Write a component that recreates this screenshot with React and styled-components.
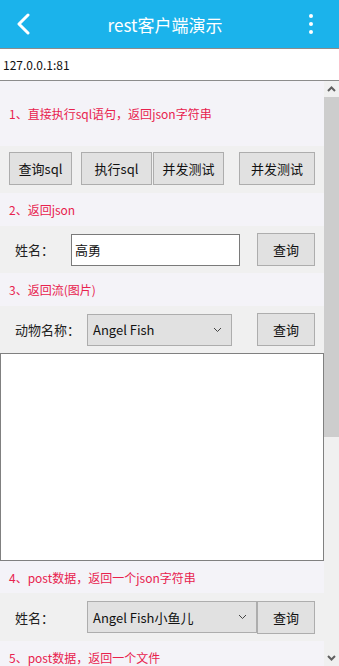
import React from "react";
import styled, { createGlobalStyle } from "styled-components";

const Global = createGlobalStyle`
  html, body { margin: 0; padding: 0; overflow: hidden; background: #ffffff; }
  body { font-family: "Noto Sans CJK SC", "Noto Sans", sans-serif; }
  * { box-sizing: border-box; }
`;

const Page = styled.div`
  width: 339px;
  height: 666px;
  display: flex;
  flex-direction: column;
  overflow: hidden;
`;

const Header = styled.header`
  height: 48px;
  flex: none;
  background: #1bb3eb;
  display: flex;
  align-items: center;
  justify-content: space-between;
  padding: 0 19px 0 14px;
  color: #fff;
`;

const Title = styled.h1`
  margin: 0;
  font-size: 17px;
  font-weight: 400;
  line-height: 1;
  color: #ffffff;
  transform: translateX(-2px);
`;

const IconSlot = styled.div`
  width: 18px;
  height: 24px;
  display: flex;
  align-items: center;
  justify-content: center;
`;

const AddressBar = styled.div`
  height: 33px;
  flex: none;
  border-top: 1px solid #8c8c8c;
  border-bottom: 1px solid #8c8c8c;
  background: #fff;
  display: flex;
  align-items: center;
  padding-left: 3px;
  font-size: 12px;
  color: #111;
`;

const Body = styled.div`
  flex: 1;
  display: flex;
  min-height: 0;
`;

const Content = styled.main`
  width: 324px;
  flex: none;
  overflow: hidden;
  display: flex;
  flex-direction: column;
`;

const SectionLabel = styled.div`
  height: ${(p) => p.$h || 33}px;
  flex: none;
  background: #f4f3f8;
  display: flex;
  align-items: center;
  padding-left: 9px;
  font-size: 12px;
  color: #e8224e;
  white-space: nowrap;
`;

const Row = styled.div`
  height: ${(p) => p.$h || 47}px;
  flex: none;
  background: #f0f0f0;
  display: flex;
  align-items: ${(p) => (p.$top ? "flex-start" : "center")};
  padding: ${(p) => (p.$top ? "6px 9px 0 9px" : "0 9px 0 15px")};
`;

const FieldLabel = styled.span`
  width: ${(p) => p.$w}px;
  flex: none;
  font-size: 13px;
  color: #222;
`;

const Button = styled.button`
  width: ${(p) => p.$w || 58}px;
  height: 33px;
  flex: none;
  margin-left: ${(p) => (p.$auto ? "auto" : `${p.$ml || 0}px`)};
  background: #e1e1e1;
  border: 1px solid #adadad;
  border-radius: 0;
  padding: 0;
  font-family: inherit;
  font-size: 13px;
  color: #111;
`;

const TextInput = styled.input`
  width: ${(p) => p.$w}px;
  height: 32px;
  flex: none;
  border: 1px solid #7a7a7a;
  background: #fff;
  padding: 0 3px;
  font-family: inherit;
  font-size: 13px;
  color: #111;
  outline: none;
`;

const Select = styled.div`
  width: ${(p) => p.$w}px;
  height: 32px;
  flex: none;
  background: #e1e1e1;
  border: 1px solid #adadad;
  display: flex;
  align-items: center;
  justify-content: space-between;
  padding: 0 9px 0 5px;
  font-size: 13px;
  color: #111;
`;

const ImageBox = styled.div`
  height: 208px;
  flex: none;
  background: #fff;
  border: 1px solid #808080;
`;

const ScrollBar = styled.div`
  width: 15px;
  flex: none;
  background: #f0f0f0;
  display: flex;
  flex-direction: column;
`;

const Arrow = styled.div`
  height: 16px;
  flex: none;
  display: flex;
  align-items: center;
  justify-content: center;
`;

const Thumb = styled.div`
  height: 340px;
  flex: none;
  background: #cdcdcd;
`;

const Track = styled.div`
  flex: 1;
`;

const Chevron = () => (
  <svg width="9" height="6" viewBox="0 0 9 6">
    <path d="M1 1 L4.5 4.5 L8 1" fill="none" stroke="#444" strokeWidth="1" />
  </svg>
);

const ScrollArrow = ({ up }) => (
  <svg width="9" height="6" viewBox="0 0 9 6">
    <path
      d={up ? "M1 5 L4.5 1.5 L8 5" : "M1 1 L4.5 4.5 L8 1"}
      fill="none"
      stroke="#606060"
      strokeWidth="2"
    />
  </svg>
);

export default function App() {
  return (
    <Page>
      <Global />
      <Header>
        <IconSlot>
          <svg width="14" height="22" viewBox="0 0 14 22">
            <path d="M12 2 L3 11 L12 20" fill="none" stroke="#fff" strokeWidth="3" strokeLinecap="round" strokeLinejoin="round" />
          </svg>
        </IconSlot>
        <Title>rest客户端演示</Title>
        <IconSlot>
          <svg width="6" height="22" viewBox="0 0 6 22">
            <circle cx="3" cy="3" r="2" fill="#fff" />
            <circle cx="3" cy="11" r="2" fill="#fff" />
            <circle cx="3" cy="19" r="2" fill="#fff" />
          </svg>
        </IconSlot>
      </Header>
      <AddressBar>127.0.0.1:81</AddressBar>
      <Body>
        <Content>
          <SectionLabel $h={65}>1、直接执行sql语句，返回json字符串</SectionLabel>
          <Row $top>
            <Button $w={63}>查询sql</Button>
            <Button $w={71} $ml={9}>执行sql</Button>
            <Button $w={71} $ml={1}>并发测试</Button>
            <Button $w={76} $ml={15}>并发测试</Button>
          </Row>
          <SectionLabel>2、返回json</SectionLabel>
          <Row>
            <FieldLabel $w={56}>姓名：</FieldLabel>
            <TextInput $w={169} value="高勇" readOnly />
            <Button $auto>查询</Button>
          </Row>
          <SectionLabel>3、返回流(图片)</SectionLabel>
          <Row>
            <FieldLabel $w={72}>动物名称：</FieldLabel>
            <Select $w={145}>
              <span>Angel Fish</span>
              <Chevron />
            </Select>
            <Button $auto>查询</Button>
          </Row>
          <ImageBox />
          <SectionLabel $h={32}>4、post数据，返回一个json字符串</SectionLabel>
          <Row $h={48}>
            <FieldLabel $w={72}>姓名：</FieldLabel>
            <Select $w={170}>
              <span>Angel Fish小鱼儿</span>
              <Chevron />
            </Select>
            <Button $auto>查询</Button>
          </Row>
          <SectionLabel>5、post数据，返回一个文件</SectionLabel>
        </Content>
        <ScrollBar>
          <Arrow>
            <ScrollArrow up />
          </Arrow>
          <Thumb />
          <Track />
          <Arrow>
            <ScrollArrow />
          </Arrow>
        </ScrollBar>
      </Body>
    </Page>
  );
}
